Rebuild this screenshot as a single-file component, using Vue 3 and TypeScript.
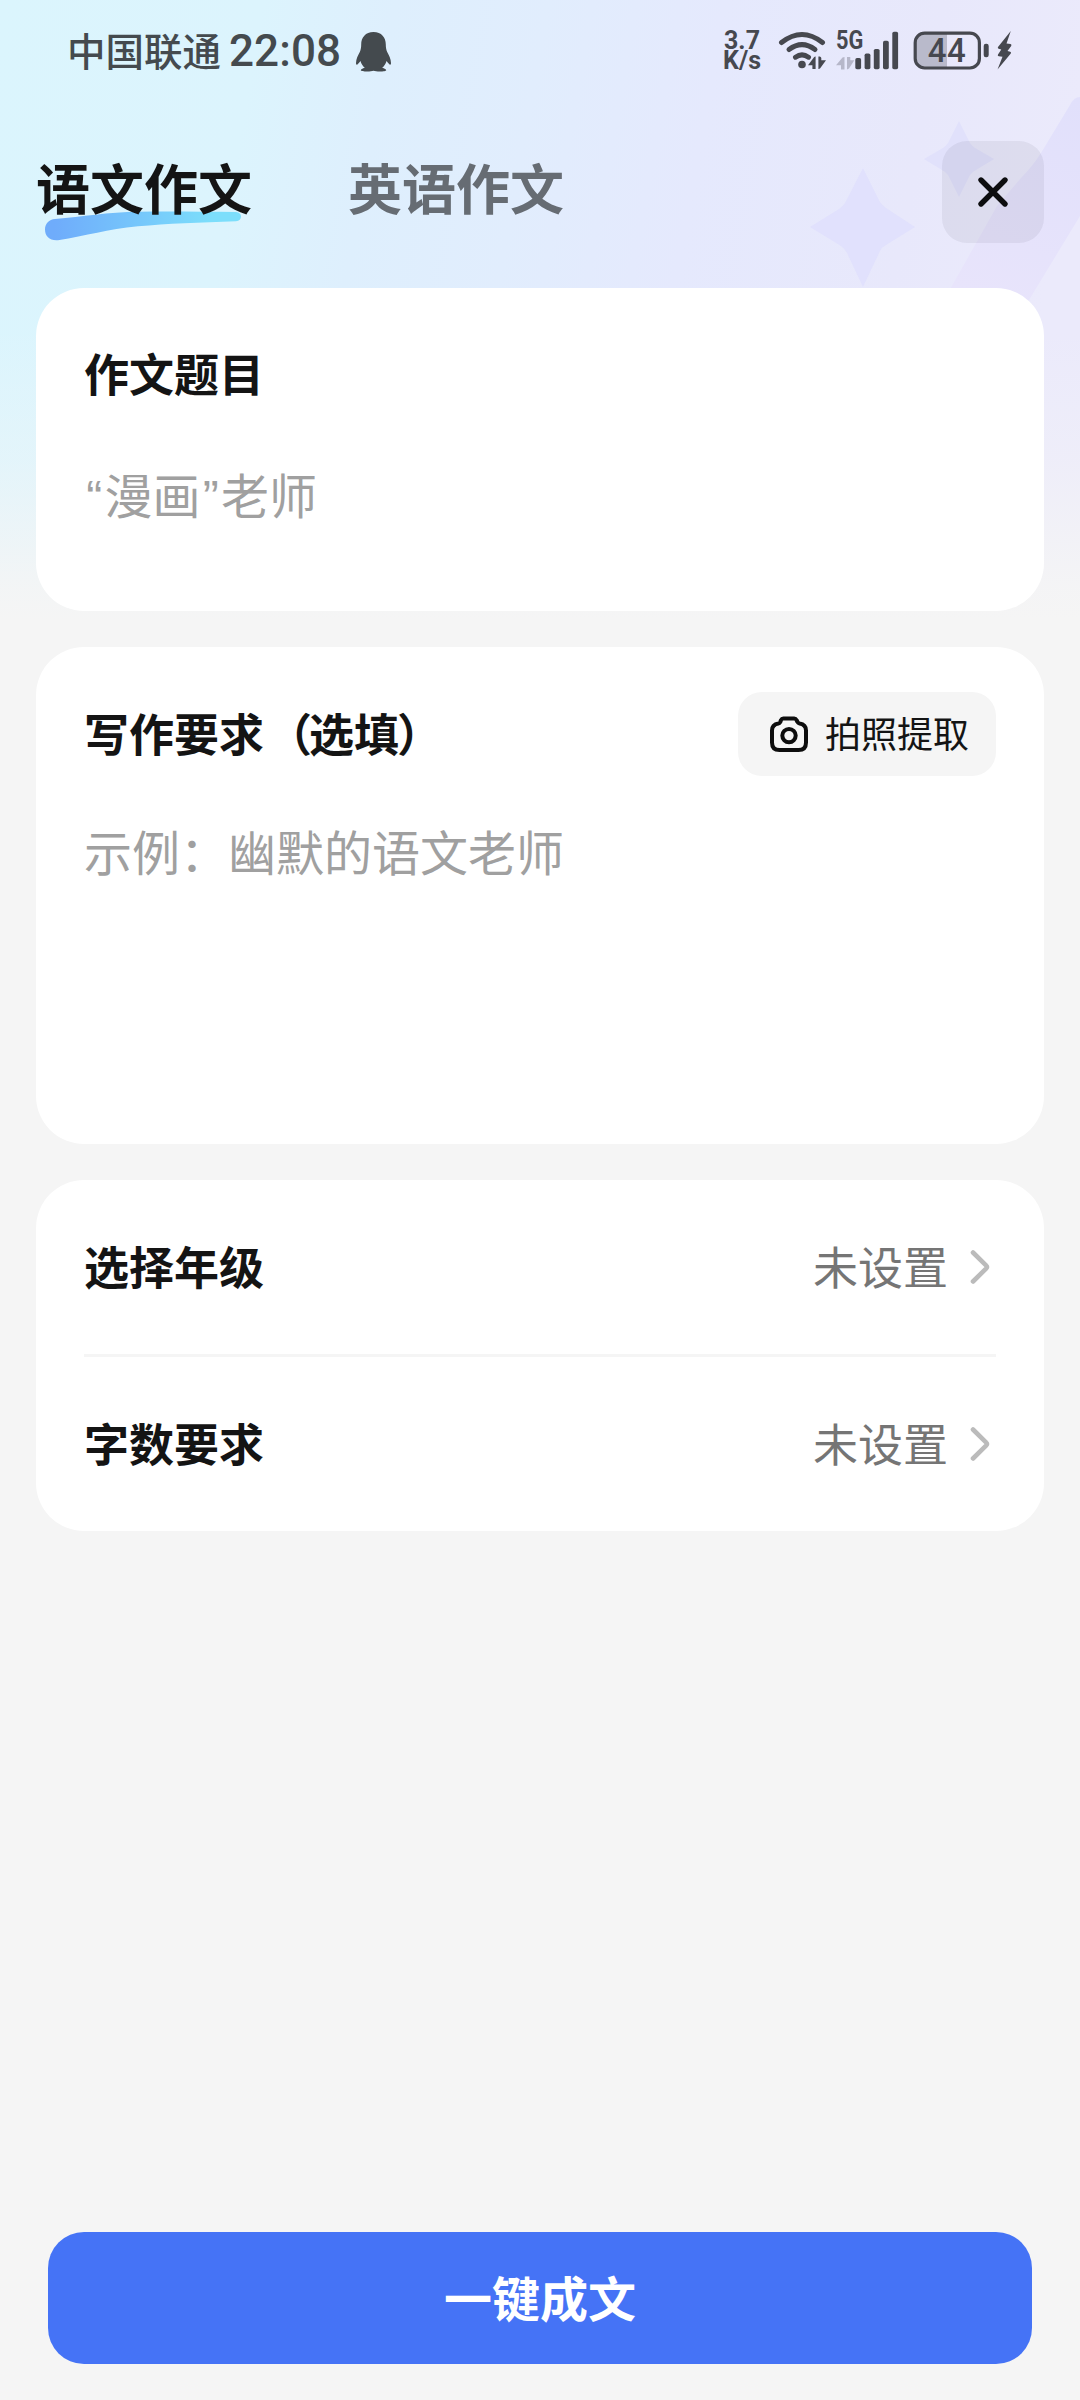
<script setup lang="ts">
import { ref } from 'vue'

interface Option {
  label: string
  value: string
}

const tabs: string[] = ['语文作文', '英语作文']
const activeTab = ref<number>(0)
const options: Option[] = [
  { label: '选择年级', value: '未设置' },
  { label: '字数要求', value: '未设置' },
]
</script>

<template>
  <div class="page">
    <svg class="backdrop" viewBox="0 0 1080 660" aria-hidden="true">
      <defs>
        <linearGradient id="tint" gradientUnits="userSpaceOnUse" x1="0" y1="0" x2="1064" y2="190">
          <stop offset="0" stop-color="#dbf5fd" />
          <stop offset="0.24" stop-color="#dcf4fd" />
          <stop offset="0.36" stop-color="#deeffd" />
          <stop offset="0.5" stop-color="#e1edfd" />
          <stop offset="0.66" stop-color="#e5e9fd" />
          <stop offset="0.86" stop-color="#e8e8fb" />
          <stop offset="1" stop-color="#ebeafb" />
        </linearGradient>
        <linearGradient id="fade" x1="0" y1="0" x2="0" y2="1">
          <stop offset="0" stop-color="#f5f5f5" stop-opacity="0" />
          <stop offset="0.5" stop-color="#f5f5f5" stop-opacity="0" />
          <stop offset="0.7" stop-color="#f5f5f5" stop-opacity="0.32" />
          <stop offset="0.89" stop-color="#f5f5f5" stop-opacity="0.92" />
          <stop offset="0.94" stop-color="#f5f5f5" />
          <stop offset="1" stop-color="#f5f5f5" />
        </linearGradient>
        <linearGradient id="band" gradientUnits="userSpaceOnUse" x1="1070" y1="95" x2="990" y2="300">
          <stop offset="0" stop-color="#e1e0fb" />
          <stop offset="1" stop-color="#e8e4fb" />
        </linearGradient>
      </defs>
      <rect width="1080" height="660" fill="url(#tint)" />
      <path d="M1080 97 Q1074 97 1070 105 L1041 153 Q1032 167 1021 178 L997 206 L944 300 L1029 300 L1080 216 Z" fill="url(#band)" />
      <path d="M863 168 L880 202 Q882 205 886 208 L915 227 L886 245 Q882 247 880 251 L863 287 L847 253 Q845 249 841 246 L810 227 L839 209 Q843 206 845 203 Z" fill="#e1e1fd" />
      <path d="M959 121 L970 143 Q972 146 975 148 L994 159 L976 170 Q972 172 970 175 L959 197 L948 175 Q946 172 942 170 L924 159 L943 148 Q946 146 948 143 Z" fill="#e1e1fb" />
      <rect width="1080" height="660" fill="url(#fade)" />
    </svg>

    <header class="status">
      <div class="status-left">
        <span class="carrier">中国联通</span>
        <span class="clock">22:08</span>
        <svg class="penguin" width="35" height="40" viewBox="0 0 35 40">
          <path d="M17.5 0C9.5 0 5.2 5.5 5.2 12.5C5.2 15 4.9 17.5 3.8 20C1.8 23.5 .2 27 0 31C0 32.6 .6 33 1.4 32.4C2.6 31.5 3.6 30.2 4.5 29C5.2 31.8 6.8 34.2 8.8 35.7C6.5 36.3 4.8 37.3 4.8 38.3C4.8 39.3 8 39.5 11 39.5C14 39.5 16 38.7 17.5 38.7C19 38.7 21 39.5 24 39.5C27 39.5 30.2 39.3 30.2 38.3C30.2 37.3 28.5 36.3 26.2 35.7C28.2 34.2 29.8 31.8 30.5 29C31.4 30.2 32.4 31.5 33.6 32.4C34.4 33 35 32.6 35 31C34.8 27 33.2 23.5 31.2 20C30.1 17.5 29.8 15 29.8 12.5C29.8 5.5 25.5 0 17.5 0Z" fill="#444a4e" />
        </svg>
      </div>
      <div class="status-right">
        <div class="speed">3.7<br />K/s</div>
        <svg class="wifi" width="48" height="40" viewBox="778 31 48 40">
          <g fill="none" stroke="#46484f" stroke-width="5" stroke-linecap="round">
            <path d="M781.5 42.5Q802 26.500 822.5 42.500" />
            <path d="M789 49.600Q802 39.700 815 49.600" />
            <path d="M795.500 57.200Q802 52.500 808.500 57.200" />
          </g>
          <circle cx="802" cy="64.500" r="3.800" fill="#46484f" />
          <path d="M815.600 56.500V69H812.400V65.300H808L814 57.200Q814.800 56.300 815.600 56.500ZM818.400 69V56.500H819.600Q821 56.500 821.300 58V60.300H826L820.200 68.300Q819.300 69.200 818.400 69Z" fill="#46484f" />
        </svg>
        <div class="mobile">
          <span class="network">5G</span>
          <svg class="bars" width="63" height="40" viewBox="836 31 63 40">
            <path d="M844.500 57V69.500H841V65.300H836L842.500 57.500ZM847 69.500V57H850.300V60.300H854.300L849 68.500Z" fill="#b6b7c9" />
            <g fill="#46484f">
              <rect x="855.300" y="58" width="5.800" height="11.300" rx="1.700" />
              <rect x="864.600" y="53.500" width="5.800" height="15.800" rx="1.700" />
              <rect x="873.800" y="48.900" width="5.800" height="20.400" rx="1.700" />
              <rect x="883" y="40.800" width="5.800" height="28.500" rx="1.700" />
              <rect x="892.300" y="31.800" width="5.800" height="37.500" rx="1.700" />
            </g>
          </svg>
        </div>
        <div class="battery">
          <svg width="99" height="40" viewBox="913 31 99 40">
            <path d="M947 34V67.500H925Q916 67.500 916 58.500V43Q916 34 925 34Z" fill="#b9bacb" />
            <rect x="915.200" y="33.200" width="64.200" height="34.800" rx="9.500" fill="none" stroke="#46484f" stroke-width="3.200" />
            <rect x="983.700" y="43.700" width="5" height="13.600" rx="2.200" fill="#46484f" />
            <path d="M1010.800 31L998 47Q997.300 48.300 998.600 48.700L1001.300 49.400L998 54.500Q997.200 56 998.800 56.300L1002.500 56.700L997.500 69.500L1010.800 53.500Q1011.600 52.200 1010.200 51.800L1007.500 51L1011.200 46Q1012 44.500 1010.500 44L1006.500 43.500Z" fill="#46484f" />
          </svg>
          <span class="percent">44</span>
        </div>
      </div>
    </header>

    <nav class="tabs">
      <button
        v-for="(tab, i) in tabs"
        :key="tab"
        class="tab"
        :class="{ active: i === activeTab }"
        @click="activeTab = i"
      >
        <svg v-if="i === activeTab" class="swash" width="196" height="30" viewBox="0 0 196 30">
          <defs>
            <linearGradient id="stroke" x1="0" y1="0" x2="1" y2="0">
              <stop offset="0.05" stop-color="#6facfb" />
              <stop offset="0.85" stop-color="#7cdefb" />
            </linearGradient>
          </defs>
          <path d="M10 8C38 6 62 1 94 .8C128 .2 160 1 191 1Q196 1.500 196 5.500Q196 9.600 191 10.200C155 11.500 122 12.500 93 15.300C62 18 42 25 13 29.200C5 30 0 25.500 0 18.500C0 12.500 4 8.400 10 8Z" fill="url(#stroke)" />
        </svg>
        <span>{{ tab }}</span>
      </button>
      <button class="close" aria-label="关闭">
        <svg width="32" height="32" viewBox="0 0 32 32">
          <path d="M4 4L28 28M28 4L4 28" stroke="#0d0d0f" stroke-width="5.400" stroke-linecap="round" />
        </svg>
      </button>
    </nav>

    <main class="cards">
      <section class="card topic">
        <h2>作文题目</h2>
        <p class="hint"><span class="quote">“</span>漫画<span class="quote">”</span>老师</p>
      </section>

      <section class="card demand">
        <div class="card-head">
          <h2>写作要求<span class="open">（</span>选填<span class="shut">）</span></h2>
          <button class="photo">
            <svg width="40" height="38" viewBox="0 0 40 38" fill="none" stroke="#0d0d0d" stroke-width="4">
              <path d="M14.300 3.500H25.200Q26.800 3.500 27.500 5L28.500 7Q29.200 8.200 30.600 8.500Q37 9.500 37 15.500V27.500Q37 35 29.500 35H10.500Q3 35 3 27.500V15.500Q3 9.500 9.400 8.500Q10.800 8.200 11.300 7L12 5Q12.700 3.500 14.300 3.500Z" stroke-linejoin="round" />
              <circle cx="20" cy="20.600" r="6.700" />
            </svg>
            <span>拍照提取</span>
          </button>
        </div>
        <p class="hint">示例：幽默的语文老师</p>
      </section>

      <section class="card options">
        <div v-for="item in options" :key="item.label" class="option">
          <h2>{{ item.label }}</h2>
          <span class="value">{{ item.value }}</span>
          <svg width="20" height="36" viewBox="0 0 20 36">
            <path d="M3 3.500L16.300 16.600Q17.800 18 16.300 19.400L3 32.500" fill="none" stroke="#bbbbbb" stroke-width="4.600" stroke-linecap="round" />
          </svg>
        </div>
      </section>
    </main>

    <footer class="footer">
      <button class="submit">一键成文</button>
    </footer>
  </div>
</template>

<style>
html,
body {
  background: #f5f5f5;
}
</style>

<style scoped>
.page {
  position: relative;
  box-sizing: border-box;
  width: 1080px;
  height: 2400px;
  display: flex;
  flex-direction: column;
  background: #f5f5f5;
  color: #141414;
  font-family: 'Noto Sans CJK SC', sans-serif;
  overflow: hidden;
}
.backdrop {
  position: absolute;
  left: 0;
  top: 0;
  width: 1080px;
  height: 660px;
}
button {
  border: 0;
  padding: 0;
  margin: 0;
  background: none;
  color: inherit;
  font: inherit;
}
h2,
p {
  margin: 0;
}
svg {
  display: block;
  flex: none;
}
.status {
  position: relative;
  height: 102px;
  display: flex;
  justify-content: space-between;
  align-items: center;
  padding: 0 68px 0 67px;
  box-sizing: border-box;
}
.status-left,
.status-right {
  display: flex;
  align-items: center;
  height: 40px;
}
.status-left {
  color: #444a4e;
  font-weight: 500;
  white-space: nowrap;
}
.carrier {
  width: 154px;
  font-size: 38.5px;
  line-height: 40px;
  margin-top: -4px;
}
.clock {
  width: 122px;
  margin-left: 8px;
  font-family: Roboto, sans-serif;
  font-size: 44px;
  line-height: 40px;
  letter-spacing: 0.1px;
}
.penguin {
  margin-left: 5px;
  margin-top: 1px;
}
.status-right {
  color: #46484f;
  font-family: Roboto, sans-serif;
}
.speed {
  width: 42px;
  margin-right: 15px;
  text-align: center;
  font-size: 25px;
  font-weight: 700;
  line-height: 20px;
  white-space: nowrap;
}
.mobile {
  position: relative;
  margin-left: 10px;
}
.network {
  position: absolute;
  left: 0;
  top: 0;
  font-size: 25px;
  line-height: 20px;
  font-weight: 700;
  transform: scaleX(0.87);
  transform-origin: 0 0;
}
.battery {
  position: relative;
  margin-left: 14px;
}
.percent {
  position: absolute;
  left: 3px;
  top: 0;
  width: 62px;
  text-align: center;
  font-size: 33px;
  font-weight: 500;
  line-height: 40px;
  letter-spacing: 0.6px;
}
.tabs {
  position: relative;
  height: 186px;
  display: flex;
  align-items: flex-start;
  padding: 39px 36px 0;
  box-sizing: border-box;
}
.tab {
  position: relative;
  margin-right: 96px;
  margin-top: 7px;
  font-size: 54px;
  line-height: 78px;
  font-weight: 700;
  color: #666c73;
  white-space: nowrap;
}
.tab.active {
  color: #141414;
}
.tab span {
  position: relative;
}
.swash {
  position: absolute;
  left: 9px;
  top: 63px;
}
.close {
  margin-left: auto;
  width: 102px;
  height: 102px;
  border-radius: 25px;
  background: rgba(20, 20, 40, 0.06);
  display: flex;
  align-items: center;
  justify-content: center;
}
.cards {
  position: relative;
  display: flex;
  flex-direction: column;
  gap: 36px;
  padding: 0 36px;
}
.card {
  box-sizing: border-box;
  border-radius: 48px;
  background: #fff;
  padding: 0 48px;
}
h2 {
  font-size: 45px;
  font-weight: 700;
  line-height: 66px;
  white-space: nowrap;
}
.open {
  margin-left: 3px;
  margin-right: -3px;
}
.shut {
  margin-left: -2px;
}
.hint {
  font-size: 48px;
  line-height: 70px;
  color: #a0a0a0;
  white-space: nowrap;
}
.quote {
  display: inline-block;
  width: 20.5px;
  text-align: center;
  font-family: 'Liberation Sans', sans-serif;
}
.topic {
  height: 323px;
  padding-top: 52px;
}
.topic .hint {
  margin-top: 52px;
}
.demand {
  height: 497px;
  padding-top: 45px;
}
.card-head {
  display: flex;
  align-items: center;
  justify-content: space-between;
  height: 84px;
}
.card-head h2 {
  margin-top: -2px;
}
.demand .hint {
  margin-top: 39px;
}
.photo {
  width: 258px;
  height: 84px;
  border-radius: 24px;
  background: #f5f5f5;
  display: flex;
  align-items: center;
  padding-left: 31px;
  box-sizing: border-box;
  font-size: 36px;
  line-height: 52px;
}
.photo span {
  margin-left: 16px;
  margin-top: -5px;
}
.option {
  display: flex;
  align-items: center;
  height: 174px;
}
.option + .option {
  border-top: 3px solid #f5f5f5;
}
.option h2 {
  margin-top: -3px;
}
.value {
  margin-left: auto;
  margin-right: 22px;
  margin-top: -3px;
  font-size: 45px;
  line-height: 66px;
  color: #757575;
}
.option svg {
  margin-right: 6px;
}
.footer {
  position: relative;
  margin-top: auto;
  padding: 0 48px 36px;
}
.submit {
  display: block;
  width: 984px;
  height: 132px;
  border-radius: 36px;
  background: #4573f6;
  color: #fff;
  font-size: 48px;
  font-weight: 700;
  line-height: 126px;
  padding-bottom: 4px;
}
</style>
